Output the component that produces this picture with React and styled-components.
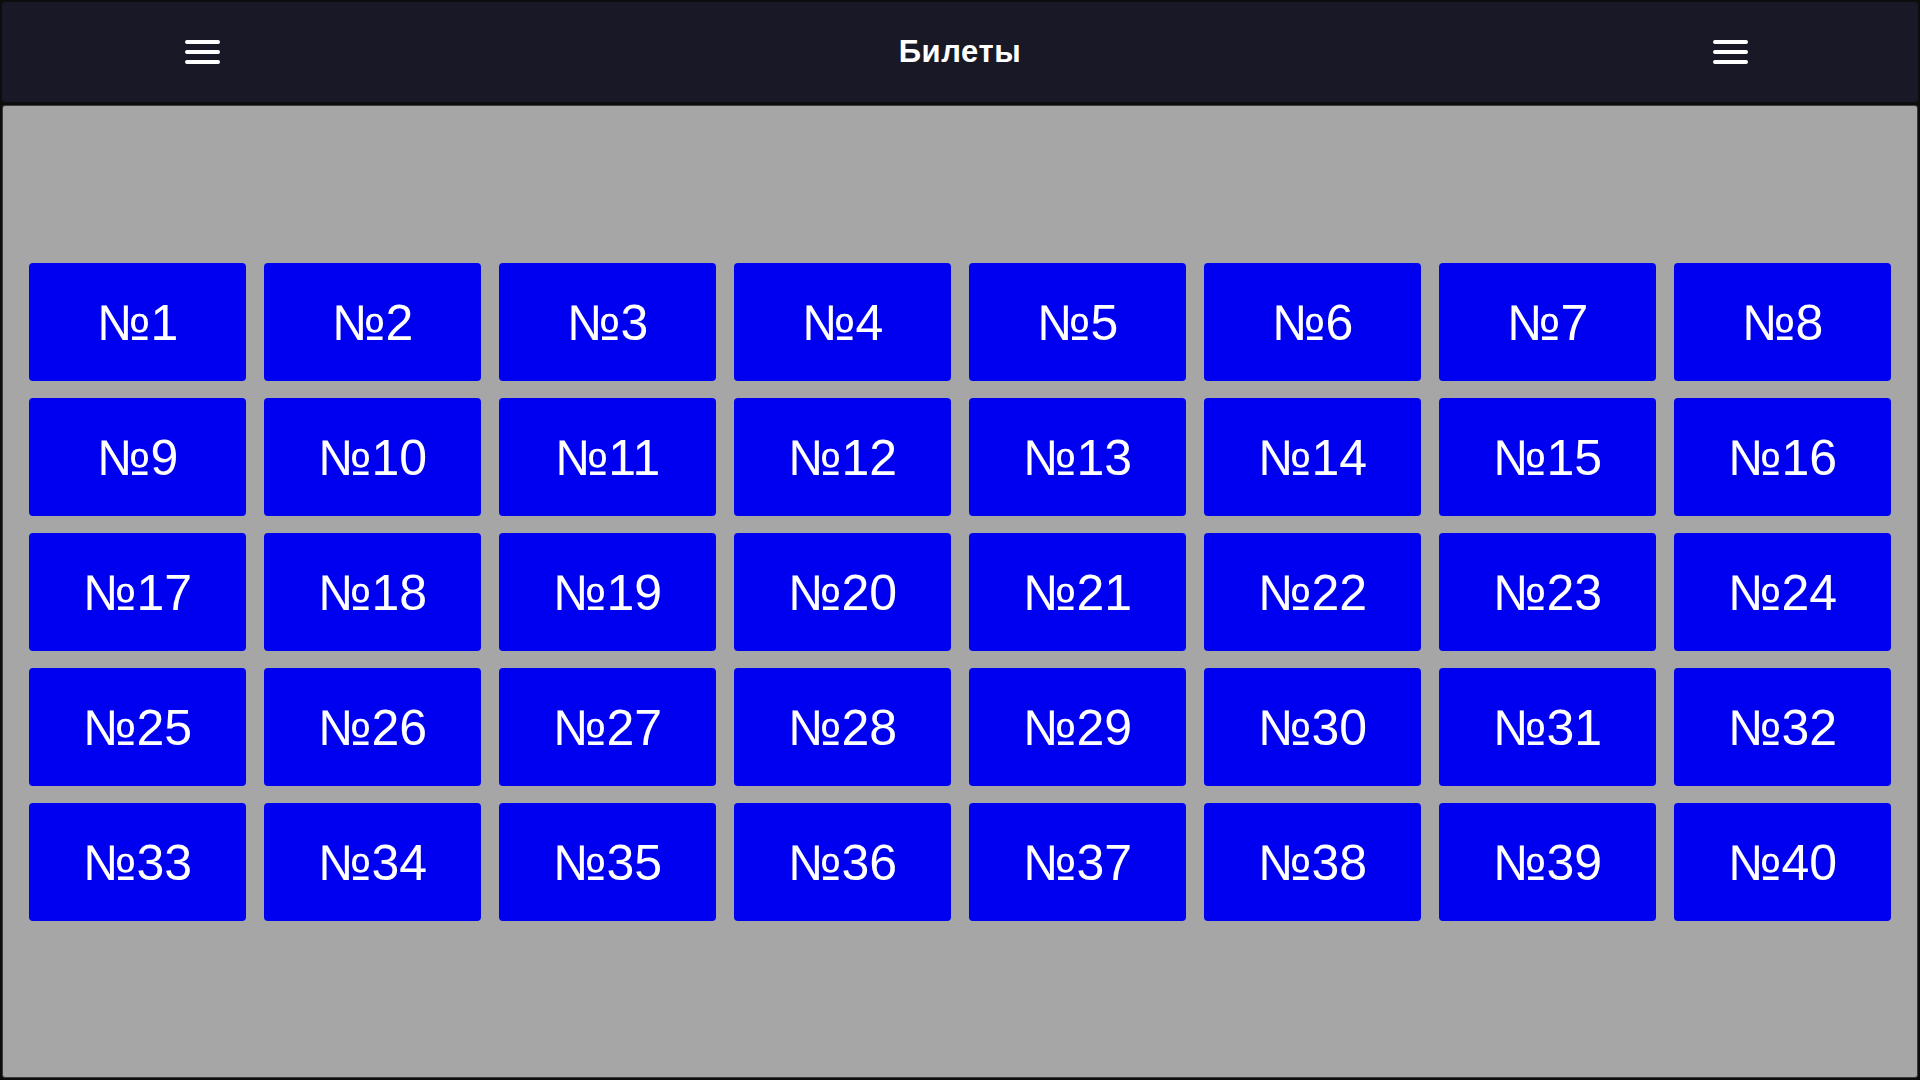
import React from 'react';
import styled, { createGlobalStyle } from 'styled-components';

const GlobalStyle = createGlobalStyle`
  html, body {
    margin: 0;
    padding: 0;
    background: #0d0d10;
  }

  body {
    font-family: "Liberation Sans", Arial, sans-serif;
  }
`;

const Page = styled.div`
  box-sizing: border-box;
  width: 1920px;
  height: 1080px;
  padding: 2px;
  display: flex;
  flex-direction: column;
  gap: 3px;
`;

const Header = styled.header`
  height: 100px;
  flex-shrink: 0;
  background: #181826;
  border-radius: 3px;
  display: grid;
  grid-template-columns: 1fr auto 1fr;
  align-items: center;
`;

const MenuButton = styled.button`
  background: none;
  border: none;
  padding: 0;
  width: 35px;
  height: 24px;
  cursor: pointer;
  display: flex;
  justify-self: ${props => (props.side === 'right' ? 'end' : 'start')};
  margin-left: ${props => (props.side === 'right' ? '0' : '183px')};
  margin-right: ${props => (props.side === 'right' ? '170px' : '0')};
`;

const Title = styled.h1`
  margin: 0;
  color: #ffffff;
  font-size: 31px;
  font-weight: 700;
  letter-spacing: 0.6px;
`;

const Panel = styled.main`
  flex: 1;
  background: #a6a6a6;
  border: 1px solid #3c3c3c;
  border-radius: 3px;
  display: flex;
  align-items: center;
  justify-content: center;
`;

const TicketGrid = styled.div`
  display: grid;
  grid-template-columns: repeat(8, 217px);
  grid-auto-rows: 118px;
  column-gap: 18px;
  row-gap: 17px;
`;

const Ticket = styled.button`
  background: #0000f0;
  border: none;
  border-radius: 4px;
  color: #ffffff;
  font-family: "Liberation Sans", Arial, sans-serif;
  font-size: 50px;
  font-weight: 400;
  display: flex;
  align-items: center;
  justify-content: center;
  cursor: pointer;
  padding: 3px 0 0;
`;

const MenuIcon = () => (
  <svg width="35" height="24" viewBox="0 0 35 24">
    <rect x="0" y="0" width="35" height="4" rx="2" fill="#fff" />
    <rect x="0" y="10" width="35" height="4" rx="2" fill="#fff" />
    <rect x="0" y="20" width="35" height="4" rx="2" fill="#fff" />
  </svg>
);

const tickets = Array.from({ length: 40 }, (_, i) => i + 1);

const App = () => (
  <>
    <GlobalStyle />
    <Page>
      <Header>
        <MenuButton side="left" aria-label="Меню">
          <MenuIcon />
        </MenuButton>
        <Title>Билеты</Title>
        <MenuButton side="right" aria-label="Настройки">
          <MenuIcon />
        </MenuButton>
      </Header>
      <Panel>
        <TicketGrid>
          {tickets.map(n => (
            <Ticket key={n}>№{n}</Ticket>
          ))}
        </TicketGrid>
      </Panel>
    </Page>
  </>
);

export default App;
